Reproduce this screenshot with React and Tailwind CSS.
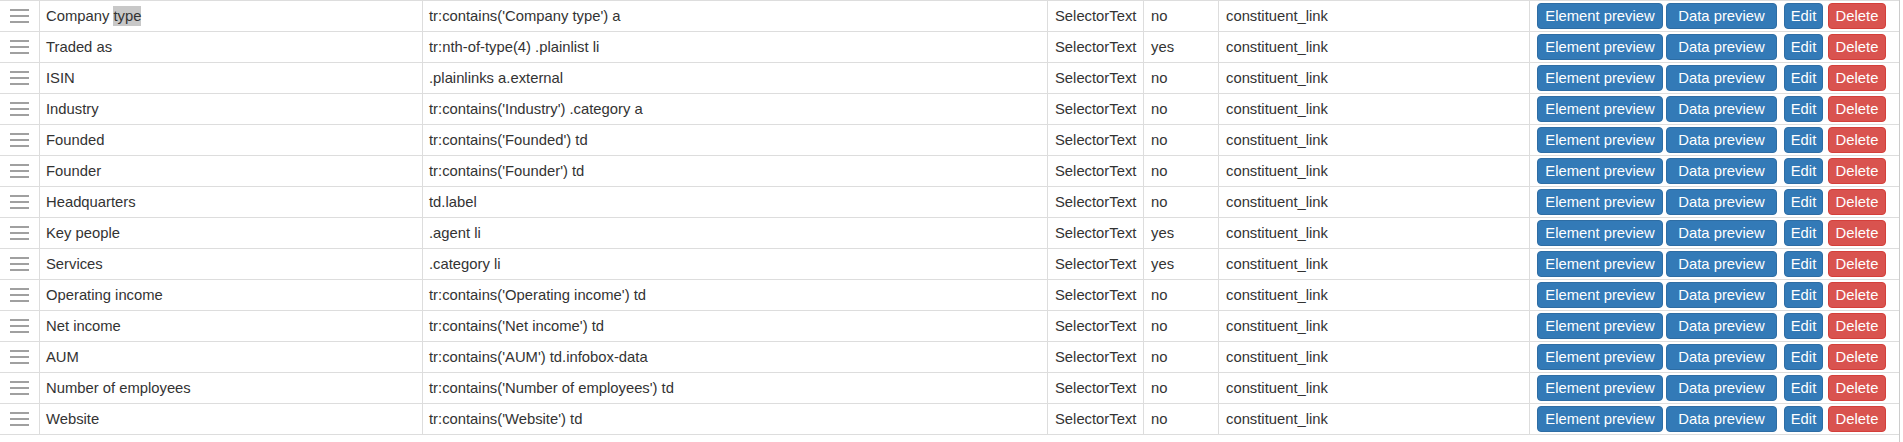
const rows = [
  ["Company type", "tr:contains('Company type') a", "no"],
  ["Traded as", "tr:nth-of-type(4) .plainlist li", "yes"],
  ["ISIN", ".plainlinks a.external", "no"],
  ["Industry", "tr:contains('Industry') .category a", "no"],
  ["Founded", "tr:contains('Founded') td", "no"],
  ["Founder", "tr:contains('Founder') td", "no"],
  ["Headquarters", "td.label", "no"],
  ["Key people", ".agent li", "yes"],
  ["Services", ".category li", "yes"],
  ["Operating income", "tr:contains('Operating income') td", "no"],
  ["Net income", "tr:contains('Net income') td", "no"],
  ["AUM", "tr:contains('AUM') td.infobox-data", "no"],
  ["Number of employees", "tr:contains('Number of employees') td", "no"],
  ["Website", "tr:contains('Website') td", "no"],
];

function Handle() {
  return (
    <div className="flex flex-col gap-[4px] w-[19px] ml-[10px]">
      <span className="block h-[2px] bg-[#a0a0a0]" />
      <span className="block h-[2px] bg-[#a0a0a0]" />
      <span className="block h-[2px] bg-[#a0a0a0]" />
    </div>
  );
}

function Row({ name, selector, multiple }) {
  const label =
    name === "Company type" ? (
      <span>
        Company <span className="bg-[#c8c8c8] py-[2px]">type</span>
      </span>
    ) : (
      <span>{name}</span>
    );
  return (
    <div className="flex h-[31px] border-b border-[#dddddd] text-[14.8px] text-[#333333]">
      <div className="w-[39px] flex items-center shrink-0">
        <Handle />
      </div>
      <div className="w-[383px] border-l border-[#dddddd] flex items-center pl-[6px] shrink-0">{label}</div>
      <div className="w-[625px] border-l border-[#dddddd] flex items-center pl-[6px] shrink-0">{selector}</div>
      <div className="w-[96px] border-l border-[#dddddd] flex items-center pl-[7px] shrink-0 whitespace-nowrap">SelectorText</div>
      <div className="w-[75px] border-l border-[#dddddd] flex items-center pl-[7px] shrink-0">{multiple}</div>
      <div className="w-[311px] border-l border-[#dddddd] flex items-center pl-[7px] shrink-0">constituent_link</div>
      <div className="flex-1 border-l border-[#dddddd] flex items-center pl-[7px] text-white whitespace-nowrap">
        <button className="w-[126px] h-[26px] rounded-[4px] bg-[#337ab7] border border-[#2e6da4] text-center">Element preview</button>
        <button className="w-[111px] h-[26px] ml-[3px] rounded-[4px] bg-[#337ab7] border border-[#2e6da4] text-center">Data preview</button>
        <button className="w-[39px] h-[26px] ml-[7px] rounded-[4px] bg-[#337ab7] border border-[#2e6da4] text-center">Edit</button>
        <button className="w-[58px] h-[26px] ml-[5px] rounded-[4px] bg-[#d9534f] border border-[#d43f3a] text-center">Delete</button>
      </div>
    </div>
  );
}

export default function App() {
  return (
    <div className="w-[1900px] h-[442px] bg-white border-r border-[#cccccc] font-['Liberation_Sans',Arial,sans-serif]">
      <div className="border-t border-[#dddddd]">
        {rows.map((r) => (
          <Row key={r[0]} name={r[0]} selector={r[1]} multiple={r[2]} />
        ))}
      </div>
    </div>
  );
}
